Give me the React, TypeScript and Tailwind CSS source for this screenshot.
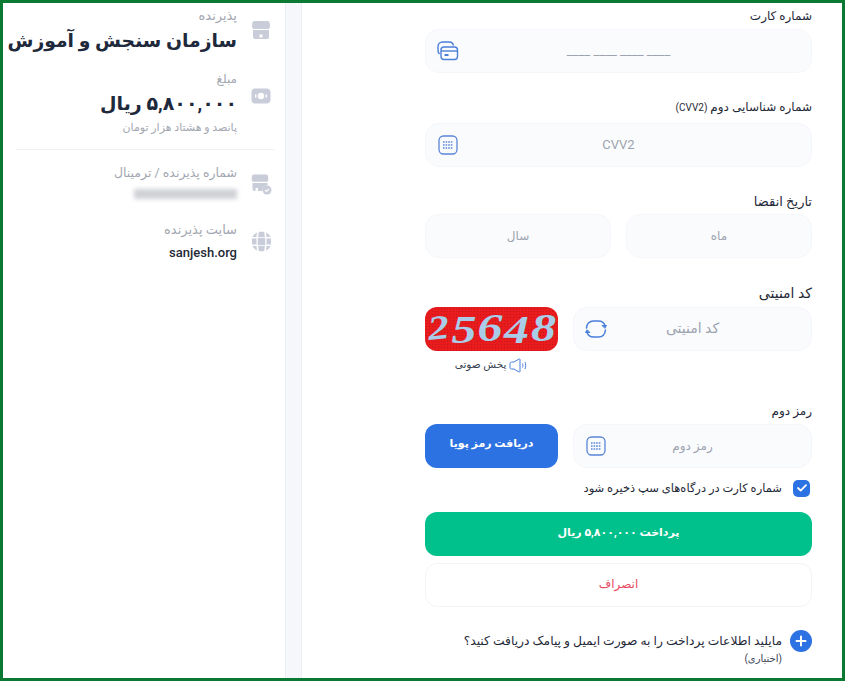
import React from 'react';

const IconStore = () => (
  <svg width="20" height="20" viewBox="0 0 20 20" fill="#c9ccd9">
    <path d="M3.500 1h13c1.200 0 2 .9 2.200 2l.3 3.200c.1 1.500-1 2.800-2.500 2.800H3.500C2 9 .9 7.700 1 6.200L1.300 3C1.500 1.900 2.300 1 3.500 1z" />
    <path fillRule="evenodd" d="M2 10h16v7c0 1.100-.9 2-2 2H4c-1.100 0-2-.9-2-2v-7zm6.500 4.500v3h3v-3h-3z" />
  </svg>
);

const IconMoney = () => (
  <svg width="20" height="20" viewBox="0 0 20 20" fill="#c9ccd9">
    <path fillRule="evenodd" d="M4 2.500h12c2 0 3.500 1.500 3.500 3.500v8c0 2-1.500 3.500-3.500 3.500H4C2 17.500.5 16 .5 14V6C.5 4 2 2.500 4 2.500zM10 6.800a3.200 3.200 0 100 6.400 3.200 3.200 0 000-6.400zM4 8.500v3h1.500v-3H4zm10.500 0v3H16v-3h-1.500z" />
  </svg>
);

const IconStoreCheck = () => (
  <svg width="21" height="21" viewBox="0 0 21 21" fill="#c9ccd9">
    <path d="M3 .5h12c1.100 0 1.900.8 2 1.800l.3 3c.1 1.400-.9 2.500-2.300 2.500H3C1.600 7.800.6 6.700.7 5.300L1 2.300C1.100 1.300 1.900.5 3 .5z" />
    <path fillRule="evenodd" d="M1.500 9h15v2.200a5 5 0 00-5 5.800H3.500c-1.100 0-2-.9-2-2V9zm3 5v3h2.500v-3H4.500z" />
    <circle cx="16" cy="16" r="4.500" />
    <path d="M14 16l1.500 1.500 2.500-2.700" stroke="#fff" strokeWidth="1.200" fill="none" />
  </svg>
);

const IconGlobe = () => (
  <svg width="21" height="21" viewBox="0 0 21 21" fill="#c9ccd9">
    <rect x="6.800" y="6.800" width="7.400" height="7.400" />
    <path d="M6 1.500C4 2.400 2.400 4 1.500 6h4c.1-1.600.3-3.100.5-4.500zM15 1.500c.2 1.400.4 2.900.5 4.500h4c-.9-2-2.500-3.600-4.500-4.500zM7.800 1c-.3 1.500-.5 3.200-.6 5h6.600c-.1-1.800-.3-3.500-.6-5-1.700-.4-3.700-.4-5.400 0z" />
    <path d="M6 19.500C4 18.600 2.400 17 1.500 15h4c.1 1.600.3 3.100.5 4.500zM15 19.500c.2-1.400.4-2.900.5-4.500h4c-.9 2-2.500 3.600-4.500 4.500zM7.800 20c-.3-1.500-.5-3.200-.6-5h6.600c-.1 1.800-.3 3.500-.6 5-1.700.4-3.700.4-5.400 0z" />
    <path d="M1 7.500v6h4.500v-6H1zM15.500 7.500v6H20v-6h-4.500z" />
  </svg>
);

const IconCards = () => (
  <svg width="22" height="20" viewBox="0 0 22 20" fill="none" stroke="#4b7fd9" strokeWidth="1.400">
    <rect x="4" y="6" width="16.500" height="12.500" rx="3" />
    <path d="M4 10h16.500" />
    <path d="M7.500 14h4" strokeWidth="2" />
    <path d="M2.500 13C1.500 12 1 11 1 9.500V5.500C1 3 3 1 5.500 1h7c2 0 3.500 1.500 4 3.500" />
  </svg>
);

const IconKeypad = () => (
  <svg width="20" height="20" viewBox="0 0 20 20" fill="none" stroke="#5b86d8" strokeWidth="1.300">
    <rect x="1" y="1" width="18" height="18" rx="4.500" />
    <path d="M5 7h10M5 10h10M5 13h10" strokeWidth="1.600" strokeDasharray="1.600 1" />
  </svg>
);

const IconRefresh = () => (
  <svg width="22" height="20" viewBox="0 0 22 20" fill="none" stroke="#4b7fd9" strokeWidth="1.500" strokeLinecap="round" strokeLinejoin="round">
    <path d="M1.500 9C2 5 4.500 2 8.500 2h5c3 0 5.500 1.800 6.500 4.500" />
    <path d="M17.500 6.500h4l-1.500 2.500z" fill="#4b7fd9" strokeWidth="1" />
    <path d="M20.500 11c-.5 4-3 7-7 7h-5c-3 0-5.500-1.800-6.500-4.500" />
    <path d="M4.500 13.500h-4l1.500-2.500z" fill="#4b7fd9" strokeWidth="1" />
  </svg>
);

const IconSound = () => (
  <svg width="19" height="15" viewBox="0 0 19 15" fill="none" stroke="#4b7fd9" strokeWidth="1">
    <path d="M1 5.500C1 4.500 1.700 4 2.500 4H5l5-3c.6-.3 1 .1 1 .7v11.600c0 .6-.4 1-1 .7L5 11H2.500C1.700 11 1 10.500 1 9.500v-4z" />
    <path d="M13.500 5.500c.5 1.300.5 2.700 0 4M16 4c.9 2.300.9 4.700 0 7" />
  </svg>
);

const Label = ({ children, className = 'text-[12px]' }: { children: React.ReactNode; className?: string }) => (
  <div className={`${className} leading-[16px] text-[#1f2937]`}>{children}</div>
);

const Field = ({ text, icon, textClass = 'text-[12px]' }: { text?: string; icon?: React.ReactNode; textClass?: string }) => (
  <div className={`relative flex h-[44px] flex-1 items-center justify-center rounded-[14px] border border-[#f5f6fa] bg-[#fafbfd] pb-[1px] text-[#9ca3af] ${textClass}`}>
    {text && <span>{text}</span>}
    {icon && <span className="absolute left-[11px] top-[10px] flex h-[22px] w-[22px] items-center justify-center">{icon}</span>}
  </div>
);

const Captcha = () => (
  <div
    dir="ltr"
    className="flex h-[44px] w-[133px] items-center rounded-xl bg-[#e81c1c] bg-[radial-gradient(#c8141e_1px,transparent_1px)] bg-[length:3px_3px] text-[40px] font-bold italic leading-none text-[#a9cde9] [font-family:'Liberation_Serif',serif]"
  >
    <span className="ml-[1px] inline-block w-[25px] translate-y-[-1px] scale-x-125 -rotate-6 text-center text-[34px]">2</span>
    <span className="inline-block w-[26px] translate-y-[1px] scale-x-125 text-center">5</span>
    <span className="inline-block w-[26px] translate-y-[-1px] scale-x-125 text-center">6</span>
    <span className="inline-block w-[27px] translate-y-[1px] scale-x-125 text-center">4</span>
    <span className="inline-block w-[27px] translate-y-[-1px] scale-x-125 text-center">8</span>
  </div>
);

const InfoRow = ({ icon, iconTop, children }: { icon: React.ReactNode; iconTop: string; children: React.ReactNode }) => (
  <div className="flex items-start">
    <div className={`flex w-[48px] shrink-0 justify-center ${iconTop}`}>{icon}</div>
    <div>{children}</div>
  </div>
);

export default function App() {
  return (
    <div
      dir="rtl"
      className="flex h-[681px] w-[845px] overflow-hidden border-[3px] border-[#0a7a33] bg-white [font-family:Roboto,'DejaVu_Sans',sans-serif]"
    >
      <main className="flex w-[540px] shrink-0 flex-col pr-[30px] pt-[5px]">
        <div className="w-[387px]">
          <Label>شماره کارت</Label>
          <div className="mt-[5px] flex">
            <Field icon={<IconCards />} text="____ ____ ____ ____" textClass="text-[13px]" />
          </div>

          <div className="mt-[26px]">
            <Label>
              شماره شناسایی دوم <span className="text-[10px]">(CVV2)</span>
            </Label>
          </div>
          <div className="mt-[7px] flex">
            <Field icon={<IconKeypad />} text="CVV2" textClass="text-[13px]" />
          </div>

          <div className="mt-[27px]">
            <Label className="text-[13px]">تاریخ انقضا</Label>
          </div>
          <div className="mt-[4px] flex gap-[15px]">
            <Field text="ماه" />
            <Field text="سال" />
          </div>

          <div className="mt-[27px]">
            <Label className="text-[14px]">کد امنیتی</Label>
          </div>
          <div className="mt-[6px] flex gap-[15px]">
            <Field text="کد امنیتی" icon={<IconRefresh />} textClass="text-[14px]" />
            <Captcha />
          </div>
          <div className="mt-[6px] flex justify-end">
            <div className="flex w-[133px] items-center justify-center gap-[3px] text-[10.5px] leading-[16px] text-[#374151]">
              <IconSound />
              <span>پخش صوتی</span>
            </div>
          </div>

          <div className="mt-[30px]">
            <Label>رمز دوم</Label>
          </div>
          <div className="mt-[5px] flex gap-[15px]">
            <Field text="رمز دوم" icon={<IconKeypad />} />
            <button className="flex h-[44px] w-[133px] items-center justify-center rounded-xl bg-[#2d72e2] pb-[3px] text-[11px] font-bold text-white">
              دریافت رمز پویا
            </button>
          </div>

          <div className="mt-[11px] flex items-center gap-[11px] pr-[2px] text-[11.5px] leading-[18px] text-[#1f2937]">
            <span className="flex h-[17px] w-[17px] items-center justify-center rounded-[5px] bg-[#2d72e2]">
              <svg width="10" height="8" viewBox="0 0 10 8" fill="none" stroke="#fff" strokeWidth="1.800" strokeLinecap="round" strokeLinejoin="round">
                <path d="M1 4l2.700 2.600L9 1.200" />
              </svg>
            </span>
            شماره کارت در درگاه‌های سپ ذخیره شود
          </div>

          <button className="mt-[15px] flex h-[44px] w-full items-center justify-center rounded-xl bg-[#00c08b] pb-[1px] text-[11px] font-bold text-white">
            پرداخت ۵,۸۰۰,۰۰۰ ریال
          </button>
          <button className="mt-[7px] flex h-[44px] w-full items-center justify-center rounded-xl border border-[#f3f4f6] bg-white pb-[3px] text-[12px] text-[#e8485f]">
            انصراف
          </button>

          <div className="mt-[23px] flex gap-[8px]">
            <span className="flex h-[22px] w-[22px] shrink-0 items-center justify-center rounded-full bg-[#2d72e2]">
              <svg width="12" height="12" viewBox="0 0 12 12" fill="none" stroke="#fff" strokeWidth="2" strokeLinecap="round">
                <path d="M6 1.500v9M1.500 6h9" />
              </svg>
            </span>
            <div>
              <div className="text-[12.3px] leading-[22px] text-[#1f2937]">
                مایلید اطلاعات پرداخت را به صورت ایمیل و پیامک دریافت کنید؟
              </div>
              <div className="text-[10px] leading-[14px] text-[#374151]">(اختیاری)</div>
            </div>
          </div>
        </div>
      </main>

      <div className="w-[17px] shrink-0 border-x border-[#eceef5] bg-[#f6f7fb]" />

      <aside className="min-w-0 flex-1 overflow-hidden pt-[5px]">
        <InfoRow icon={<IconStore />} iconTop="pt-[12px]">
          <div className="text-[13px] leading-[16px] text-[#a3a7b1]">پذیرنده</div>
          <div className="mt-[3px] whitespace-nowrap text-[18.8px] font-bold leading-[28px] text-[#1e293b]">سازمان سنجش و آموزش</div>
        </InfoRow>

        <div className="mt-[16px]">
          <InfoRow icon={<IconMoney />} iconTop="pt-[15px]">
            <div className="text-[12px] leading-[16px] text-[#a3a7b1]">مبلغ</div>
            <div className="mt-[3px] text-[19px] font-bold leading-[28px] text-[#1e293b]">۵,۸۰۰,۰۰۰ ریال</div>
            <div className="mt-[2px] text-[11px] leading-[16px] text-[#a3a7b1]">پانصد و هشتاد هزار تومان</div>
          </InfoRow>
        </div>

        <div className="ml-[13px] mr-[10px] mt-[13px] border-t border-[#f1f2f5]" />

        <div className="mt-[13px]">
          <InfoRow icon={<IconStoreCheck />} iconTop="pt-[11px]">
            <div className="text-[12.5px] leading-[20px] text-[#a3a7b1]">شماره پذیرنده / ترمینال</div>
            <div className="mt-[6px] h-[10px] w-[103px] bg-[#cfd1d6] blur-[2px]" />
          </InfoRow>
        </div>

        <div className="mt-[21px]">
          <InfoRow icon={<IconGlobe />} iconTop="pt-[11px]">
            <div className="text-[13px] leading-[20px] text-[#a3a7b1]">سایت پذیرنده</div>
            <div className="mt-[4px] text-[13px] font-medium leading-[18px] text-[#1f2937]">sanjesh.org</div>
          </InfoRow>
        </div>
      </aside>
    </div>
  );
}
